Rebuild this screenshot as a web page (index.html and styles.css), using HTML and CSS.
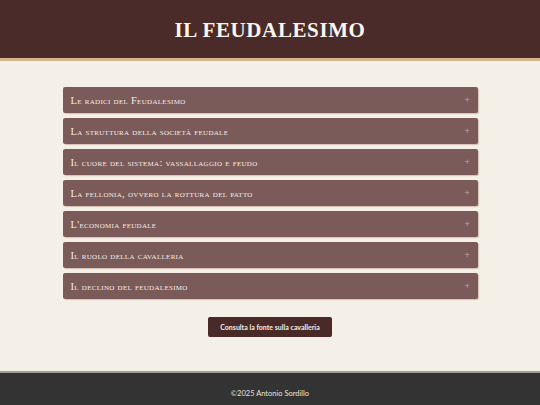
FILE: index.html
```html
<!DOCTYPE html>
<html lang="it">
<head>
<meta charset="utf-8">
<title>Il Feudalesimo</title>
<link rel="stylesheet" href="styles.css">
</head>
<body>
<header class="site-header">
  <h1 class="title">Il Feudalesimo</h1>
</header>
<main class="content">
  <div class="accordion">
    <button class="acc-item"><span class="acc-label">Le radici del Feudalesimo</span><span class="acc-plus">+</span></button>
    <button class="acc-item"><span class="acc-label">La struttura della società feudale</span><span class="acc-plus">+</span></button>
    <button class="acc-item"><span class="acc-label">Il cuore del sistema: vassallaggio e feudo</span><span class="acc-plus">+</span></button>
    <button class="acc-item"><span class="acc-label">La fellonia, ovvero la rottura del patto</span><span class="acc-plus">+</span></button>
    <button class="acc-item"><span class="acc-label">L'economia feudale</span><span class="acc-plus">+</span></button>
    <button class="acc-item"><span class="acc-label">Il ruolo della cavalleria</span><span class="acc-plus">+</span></button>
    <button class="acc-item"><span class="acc-label">Il declino del feudalesimo</span><span class="acc-plus">+</span></button>
  </div>
  <div class="cta-wrap">
    <a class="cta" href="#">Consulta la fonte sulla cavalleria</a>
  </div>
</main>
<footer class="site-footer">
  <p class="copy">©2025 Antonio Sordillo</p>
</footer>
</body>
</html>
```
FILE: styles.css
```css
* { box-sizing: border-box; }
html, body { margin: 0; padding: 0; }
body {
  background: #f4f0e8;
  font-family: "Lato", "Liberation Sans", sans-serif;
  min-height: 405px;
  display: flex;
  flex-direction: column;
}
.site-header {
  background: #4a2b29;
  height: 61px;
  border-bottom: 3px solid #d4b48f;
  display: flex;
  align-items: center;
  justify-content: center;
}
.title {
  margin: 0;
  color: #fbf7f0;
  font-family: "Liberation Serif", "DejaVu Serif", serif;
  font-weight: bold;
  font-size: 21px;
  letter-spacing: 0.6px;
  text-transform: uppercase;
  line-height: 1;
  padding-top: 2px;
}
.content {
  flex: 1;
  padding-top: 26px;
}
.accordion {
  width: 415px;
  margin: 0 auto;
  display: flex;
  flex-direction: column;
  gap: 5px;
}
.acc-item {
  height: 26px;
  background: #7b5b59;
  border: none;
  border-radius: 2px;
  box-shadow: 1px 1px 1px rgba(180, 130, 110, 0.45);
  display: flex;
  align-items: center;
  justify-content: space-between;
  padding: 0 7px 0 8px;
  color: #f4ece6;
  font-family: "Liberation Serif", "DejaVu Serif", serif;
  font-variant: small-caps;
  font-size: 10.5px;
  letter-spacing: 0.3px;
  text-align: left;
}
.acc-plus {
  font-family: "DejaVu Sans", sans-serif;
  font-variant: normal;
  color: #c9a58e;
  font-size: 7px;
}
.cta-wrap {
  display: flex;
  justify-content: center;
  padding-top: 18px;
  padding-bottom: 34px;
}
.cta {
  display: block;
  width: 124px;
  height: 20px;
  line-height: 20px;
  text-align: center;
  background: #4a2a28;
  color: #f4ece6;
  border-radius: 2px;
  font-family: "Lato", "Liberation Sans", sans-serif;
  font-weight: bold;
  font-size: 7px;
  text-decoration: none;
}
.site-footer {
  background: #333333;
  border-top: 2px solid #a49c90;
  height: 34px;
  display: flex;
  align-items: center;
  justify-content: center;
}
.copy {
  margin: 0;
  padding-top: 8px;
  color: #e8e4df;
  font-family: "Lato", "Liberation Sans", sans-serif;
  font-size: 7.5px;
}
```
